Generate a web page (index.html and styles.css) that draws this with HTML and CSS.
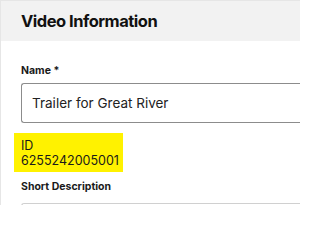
FILE: index.html
```html
<!DOCTYPE html>
<html>
<head>
<meta charset="utf-8">
<link rel="stylesheet" href="styles.css">
</head>
<body>
<div class="panel">
  <div class="header"><h2 class="title">Video Information</h2></div>
  <div class="content">
    <div class="label name-label">Name *</div>
    <div class="input"><span class="input-text">Trailer for Great River</span></div>
    <div class="id-box">
      <div class="id-label">ID</div>
      <div class="id-value">6255242005001</div>
    </div>
    <div class="label desc-label">Short Description</div>
    <div class="input input-desc"></div>
  </div>
</div>
</body>
</html>
```

FILE: styles.css
```css
html, body {
  margin: 0;
  padding: 0;
  background: #ffffff;
  overflow: hidden;
}
body {
  font-family: Inter, "Liberation Sans", sans-serif;
  color: #161616;
  width: 300px;
  height: 205px;
}
.panel {
  border-left: 1px solid #e6e6e6;
  border-top: 1px solid #e6e6e6;
  height: 205px;
  box-sizing: border-box;
  overflow: hidden;
}
.header {
  background: #f2f2f2;
  height: 40px;
  display: flex;
  align-items: center;
  padding-left: 20px;
}
.title {
  margin: 0;
  font-size: 16.5px;
  font-weight: 700;
  line-height: 22px;
  letter-spacing: -0.5px;
  color: #111;
}
.content {
  padding-left: 20px;
}
.label {
  font-size: 10.5px;
  font-weight: 700;
  line-height: 14px;
  color: #1a1a1a;
}
.name-label {
  margin-top: 23px;
}
.input {
  margin-top: 5px;
  height: 40px;
  box-sizing: border-box;
  border: 1px solid #8c8c8c;
  border-right: none;
  border-radius: 3px 0 0 3px;
  display: flex;
  align-items: center;
  padding-left: 10px;
}
.input-text {
  font-size: 13.5px;
  color: #222;
}
.id-box {
  margin-top: 10px;
  margin-left: -7px;
  width: 109px;
  height: 39px;
  box-sizing: border-box;
  background: #fff200;
  padding: 5px 7px 0;
}
.id-label, .id-value {
  font-size: 12.5px;
  line-height: 15px;
  color: #1a1a1a;
}
.desc-label {
  margin-top: 8px;
}
.input-desc {
  margin-top: 9px;
  border-color: #d0d0d0;
}
```
